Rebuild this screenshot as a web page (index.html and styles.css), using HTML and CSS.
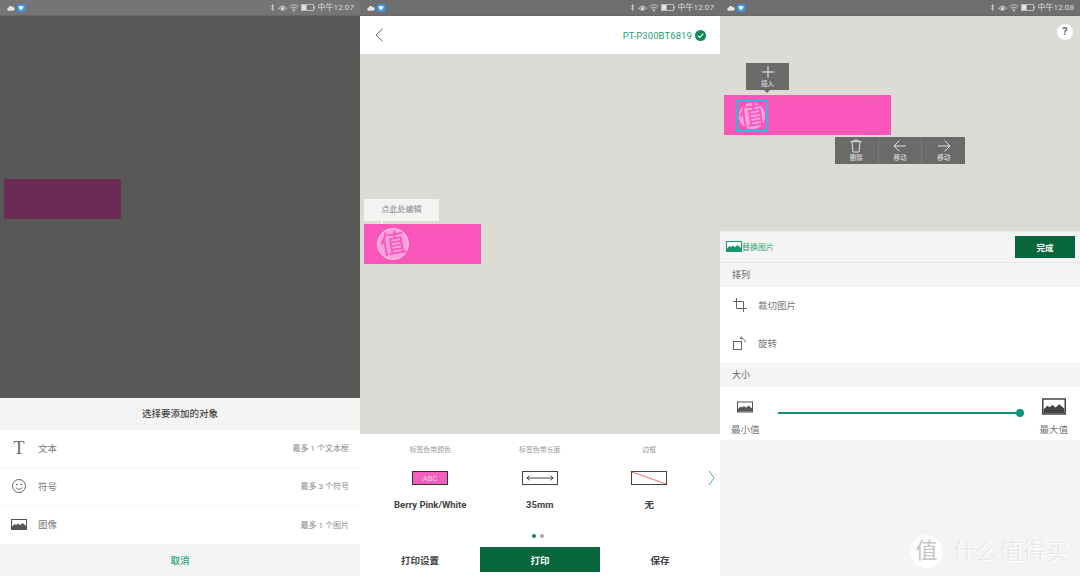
FILE: index.html
```html
<!DOCTYPE html>
<html lang="zh">
<head>
<meta charset="utf-8">
<title>Label editor</title>
<link rel="stylesheet" href="styles.css">
</head>
<body>
<svg class="defs" width="0" height="0" aria-hidden="true">
  <symbol id="cloud" viewBox="0 0 9 7"><path d="M1.800 6.600A1.700 1.700 0 0 1 1.600 3.200 2.600 2.600 0 0 1 6.400 2.400 2.100 2.100 0 0 1 7 6.600Z" fill="#e2e2e2"/></symbol>
  <symbol id="app" viewBox="0 0 9 9"><rect width="9" height="9" rx="1.500" fill="#3f95e0"/><path d="M2 2.200h5v2.200L4.500 7.200 2 4.400Z" fill="#e8f3fc"/></symbol>
  <symbol id="bt" viewBox="0 0 6 10"><path d="M1 2.600 4.600 6.800 3 8.600V1.400L4.600 3.200 1 7.400" fill="none" stroke="#ddd" stroke-width=".8"/></symbol>
  <symbol id="eye" viewBox="0 0 10 9"><path d="M.5 5Q5 .8 9.500 5 5 9 .5 5Z" fill="none" stroke="#ddd" stroke-width=".9"/><circle cx="5" cy="5" r="1.700" fill="#ddd"/><path d="M2.500 2 3.200 3M5 1.200V2.500M7.500 2 6.800 3" stroke="#ddd" stroke-width=".7"/></symbol>
  <symbol id="wifi" viewBox="0 0 10 8"><path d="M.5 2.600Q5-1 9.500 2.600M2 4.200Q5 2 8 4.200M3.400 5.700Q5 4.700 6.600 5.700" fill="none" stroke="#ddd" stroke-width=".8"/><circle cx="5" cy="7" r=".8" fill="#ddd"/></symbol>
  <symbol id="batt" viewBox="0 0 14 7"><rect x=".4" y=".4" width="12" height="6.200" fill="none" stroke="#ccc" stroke-width=".8"/><rect x="1" y="1" width="4.500" height="5" fill="#e4e4e4"/><rect x="12.700" y="2.300" width="1.100" height="2.400" fill="#ccc"/></symbol>
  <symbol id="pic" viewBox="0 0 16 11"><rect x=".5" y=".5" width="15" height="10" fill="#fff" stroke="currentColor"/><path d="M1 10V7.500L3.500 5 5 6 7 4.500 9 6.200 11.500 4 15 7V10Z" fill="currentColor"/></symbol>
</svg>

<main class="screens">

  <section class="screen screen-dim">
    <header class="status">
      <div class="status-side"><svg class="ic-cloud"><use href="#cloud"/></svg><svg class="ic-app"><use href="#app"/></svg></div>
      <div class="status-side"><svg class="ic-bt"><use href="#bt"/></svg><svg class="ic-eye"><use href="#eye"/></svg><svg class="ic-wifi"><use href="#wifi"/></svg><svg class="ic-batt"><use href="#batt"/></svg><span class="clock">中午12:07</span></div>
    </header>
    <div class="backdrop"><div class="label label-dim"></div></div>
    <div class="sheet">
      <h2 class="sheet-title">选择要添加的对象</h2>
      <ul class="sheet-list">
        <li class="sheet-row">
          <span class="t-glyph">T</span><span class="row-name">文本</span><span class="row-note">最多 1 个文本框</span>
        </li>
        <li class="sheet-row">
          <svg class="row-icon" viewBox="0 0 16 16"><circle cx="8" cy="8" r="6.500" fill="none" stroke="#555" stroke-width=".9"/><circle cx="5.700" cy="6.500" r=".8" fill="#555"/><circle cx="10.300" cy="6.500" r=".8" fill="#555"/><path d="M4.800 9.600Q8 13 11.200 9.600" fill="none" stroke="#555" stroke-width=".9"/></svg>
          <span class="row-name">符号</span><span class="row-note">最多 3 个符号</span>
        </li>
        <li class="sheet-row">
          <svg class="row-icon pic-gray"><use href="#pic"/></svg>
          <span class="row-name">图像</span><span class="row-note">最多 1 个图片</span>
        </li>
      </ul>
      <button class="sheet-cancel">取消</button>
    </div>
  </section>

  <section class="screen">
    <header class="status">
      <div class="status-side"><svg class="ic-cloud"><use href="#cloud"/></svg><svg class="ic-app"><use href="#app"/></svg></div>
      <div class="status-side"><svg class="ic-bt"><use href="#bt"/></svg><svg class="ic-eye"><use href="#eye"/></svg><svg class="ic-wifi"><use href="#wifi"/></svg><svg class="ic-batt"><use href="#batt"/></svg><span class="clock">中午12:07</span></div>
    </header>
    <div class="topbar">
      <svg class="back" viewBox="0 0 8 14"><path d="M7.500 .8 1 7 7.500 13.200" fill="none" stroke="#666" stroke-width="1"/></svg>
      <div class="device">PT-P300BT6819
        <svg class="check" viewBox="0 0 11 11"><circle cx="5.500" cy="5.500" r="5.500" fill="#0a8a56"/><path d="M2.800 5.600 4.800 7.500 8.300 3.700" fill="none" stroke="#fff" stroke-width="1.200"/></svg>
      </div>
    </div>
    <div class="canvas canvas-mid">
      <div class="hint">点此处编辑</div>
      <div class="label label-mid">
        <div class="label-guide"></div>
        <div class="stamp"><span class="stamp-glyph">值</span></div>
      </div>
    </div>
    <div class="settings">
      <div class="settings-cols">
        <div class="setting">
          <div class="setting-label">标签色带颜色</div>
          <div class="swatch swatch-pink">ABC</div>
          <div class="setting-value">Berry Pink/White</div>
        </div>
        <div class="setting">
          <div class="setting-label">标签色带长度</div>
          <div class="swatch">
            <svg class="len" viewBox="0 0 30 8"><path d="M1 4H29M4 1.500 1 4 4 6.500M26 1.500 29 4 26 6.500" fill="none" stroke="#333" stroke-width="1"/></svg>
          </div>
          <div class="setting-value">35mm</div>
        </div>
        <div class="setting">
          <div class="setting-label">边框</div>
          <div class="swatch">
            <svg class="none-line" viewBox="0 0 36 12" preserveAspectRatio="none"><path d="M0 0 36 12" stroke="#f46a6a" stroke-width="1"/></svg>
          </div>
          <div class="setting-value">无</div>
        </div>
        <svg class="next" viewBox="0 0 7 16"><path d="M1 .8 6 8 1 15.200" fill="none" stroke="#4fb497" stroke-width="1"/></svg>
      </div>
      <div class="dots"><i class="dot dot-on"></i><i class="dot"></i></div>
      <div class="actions">
        <button class="action">打印设置</button>
        <button class="action action-main">打印</button>
        <button class="action">保存</button>
      </div>
    </div>
  </section>

  <section class="screen">
    <header class="status">
      <div class="status-side"><svg class="ic-cloud"><use href="#cloud"/></svg><svg class="ic-app"><use href="#app"/></svg></div>
      <div class="status-side"><svg class="ic-bt"><use href="#bt"/></svg><svg class="ic-eye"><use href="#eye"/></svg><svg class="ic-wifi"><use href="#wifi"/></svg><svg class="ic-batt"><use href="#batt"/></svg><span class="clock">中午12:08</span></div>
    </header>
    <div class="canvas canvas-edit">
      <div class="help">?</div>
      <div class="tool tool-insert">
        <div class="tool-btn">
          <svg class="tool-icon" viewBox="0 0 14 14"><path d="M7 1V13M1 7H13" stroke="#eee" stroke-width="1" fill="none"/></svg>
          <span class="tool-text">插入</span>
        </div>
      </div>
      <div class="label label-edit">
        <div class="label-guide"></div>
        <div class="stamp stamp-selected"><span class="stamp-glyph">值</span></div>
      </div>
      <div class="tool tool-move">
        <div class="tool-btn">
          <svg class="tool-icon" viewBox="0 0 14 14"><path d="M1.500 2.500H12.500M3 2.500 4 13H10L11 2.500M5 2.500V1H9V2.500" stroke="#eee" stroke-width=".9" fill="none"/></svg>
          <span class="tool-text">删除</span>
        </div>
        <div class="tool-btn">
          <svg class="tool-icon" viewBox="0 0 14 14"><path d="M13 7H1M6.500 1.500 1 7 6.500 12.500" stroke="#eee" stroke-width=".9" fill="none"/></svg>
          <span class="tool-text">移动</span>
        </div>
        <div class="tool-btn">
          <svg class="tool-icon" viewBox="0 0 14 14"><path d="M1 7H13M7.500 1.500 13 7 7.500 12.500" stroke="#eee" stroke-width=".9" fill="none"/></svg>
          <span class="tool-text">移动</span>
        </div>
      </div>
    </div>
    <div class="edit-panel">
      <div class="replace-bar">
        <div class="replace"><svg class="replace-icon"><use href="#pic"/></svg>替换图片</div>
        <button class="done">完成</button>
      </div>
      <div class="group-head">排列</div>
      <div class="edit-row">
        <svg class="edit-icon" viewBox="0 0 14 14"><path d="M3.500 0V10.500H14M0 3.500H10.500V14" fill="none" stroke="#555" stroke-width=".9"/></svg>
        <span class="edit-name">裁切图片</span>
      </div>
      <div class="edit-row">
        <svg class="edit-icon" viewBox="0 0 14 14"><rect x=".5" y="5.500" width="8" height="8" fill="none" stroke="#555" stroke-width=".9"/><path d="M7 2Q11.500 1.800 12.500 6.500M7 2 9 .5M7 2 9 3.500" fill="none" stroke="#555" stroke-width=".8"/></svg>
        <span class="edit-name">旋转</span>
      </div>
      <div class="group-head">大小</div>
      <div class="size-row">
        <div class="size-end">
          <svg class="size-small"><use href="#pic"/></svg>
          <span class="size-text">最小值</span>
        </div>
        <div class="slider"><i class="slider-knob"></i></div>
        <div class="size-end">
          <svg class="size-big"><use href="#pic"/></svg>
          <span class="size-text">最大值</span>
        </div>
      </div>
    </div>
  </section>

  <div class="watermark"><span class="wm-badge">值</span><span class="wm-text">什么值得买</span></div>
</main>
</body>
</html>
```
FILE: styles.css
```css
* { box-sizing: border-box; }
html, body { margin: 0; padding: 0; }
body {
  width: 1080px;
  height: 576px;
  overflow: hidden;
  font-family: "Roboto", "Noto Sans CJK SC", sans-serif;
  background: #f4f4f4;
}
ul { list-style: none; margin: 0; padding: 0; }
h2 { margin: 0; }
button { border: 0; padding: 0; background: none; font-family: inherit; }
.defs { position: absolute; }

.screens { position: relative; display: flex; width: 1080px; height: 576px; }
.screen { width: 360px; height: 576px; display: flex; flex-direction: column; background: #f4f4f4; }

.status {
  height: 16px;
  flex: none;
  display: flex;
  justify-content: space-between;
  align-items: center;
  padding: 0 6px 0 7px;
  background: #6f6f6f;
  border-bottom: 1px solid #686868;
}
.screen-dim .status { background: #757575; }
.status-side { display: flex; align-items: center; gap: 2px; }
.ic-cloud { width: 8px; height: 6px; }
.ic-app { width: 8px; height: 8px; }
.ic-bt { width: 5px; height: 9px; margin-right: 1px; }
.ic-eye { width: 9px; height: 8px; margin-right: 0; }
.ic-wifi { width: 10px; height: 8px; margin-right: 0; }
.ic-batt { width: 14px; height: 7px; margin-right: 0; }
.clock { font-size: 8px; line-height: 10px; color: #ddd; letter-spacing: .1px; }

/* panel 1 */
.backdrop { position: relative; flex: 1; background: #585857; }
.label { position: absolute; width: 117px; height: 40px; }
.label-dim { left: 4px; top: 163px; background: #6b2b55; }
.sheet { flex: none; height: 178px; background: #f4f4f4; }
.sheet-title {
  height: 32px;
  font-size: 9.500px;
  font-weight: 500;
  line-height: 32px;
  text-align: center;
  color: #444;
}
.sheet-list { background: #fff; }
.sheet-row {
  display: flex;
  align-items: center;
  height: 38px;
  padding: 0 11px 2px;
  border-bottom: 1px solid #f6f6f6;
}
.sheet-row:last-child { border-bottom: 0; }
.t-glyph {
  width: 16px;
  font-family: "Liberation Serif", serif;
  font-size: 18px;
  line-height: 18px;
  text-align: center;
  color: #666;
}
.row-icon { width: 16px; height: 16px; flex: none; }
.pic-gray { height: 11px; color: #555; }
.row-name { margin-left: 11px; font-size: 9.500px; color: #777; }
.row-note { margin-left: auto; font-size: 8px; color: #888; }
.sheet-cancel {
  display: block;
  width: 100%;
  height: 32px;
  font-size: 9.500px;
  font-weight: 500;
  color: #2aa573;
}

/* panel 2 */
.topbar {
  height: 38px;
  flex: none;
  display: flex;
  justify-content: space-between;
  align-items: center;
  padding: 0 14px 0 15px;
  background: #fff;
}
.back { width: 8px; height: 14px; }
.device { display: flex; align-items: center; gap: 3px; font-size: 9.500px; font-weight: 400; letter-spacing: .1px; color: #27a070; }
.check { width: 11px; height: 11px; }
.canvas { position: relative; background: #dcdbd5; }
.canvas-mid { flex: none; height: 380px; }
.hint {
  position: absolute;
  left: 4px;
  top: 145px;
  width: 75px;
  height: 22px;
  background: #f3f3f2;
  font-size: 8px;
  line-height: 22px;
  text-align: center;
  color: #888;
}
.hint::after {
  content: "";
  position: absolute;
  left: 17px;
  bottom: -3px;
  width: 2px;
  height: 3px;
  background: #f3f3f2;
}
.label-mid { left: 4px; top: 170px; background: #fa55bb; }
.label-guide {
  position: absolute;
  left: 12px;
  top: 5px;
  right: 12px;
  bottom: 5px;
  border: 1px solid #ea66b5;
}
.stamp {
  position: absolute;
  left: 13px;
  top: 4px;
  width: 32px;
  height: 32px;
  display: flex;
  align-items: center;
  justify-content: center;
  border-radius: 50%;
  background: #f9a2db;
  border: 1px solid #fcc6e9;
  color: #fa55bb;
}
.stamp-glyph {
  display: block;
  font-size: 26px;
  line-height: 30px;
  transform: rotate(-10deg);
}
.stamp-selected {
  border-radius: 0;
  border: 2px solid #33b8dc;
  background: radial-gradient(circle closest-side, #f9a2db 92%, #fa55bb 96%);
  left: 12px;
  top: 5px;
}
.settings { flex: 1; background: #fff; display: flex; flex-direction: column; }
.settings-cols { position: relative; display: flex; padding-top: 10px; height: 98px; }
.setting { width: 109.500px; display: flex; flex-direction: column; align-items: center; }
.setting:first-child { margin-left: 15.500px; }
.setting-label { font-size: 6.900px; line-height: 12px; color: #999; }
.swatch {
  width: 36px;
  height: 14px;
  margin-top: 15px;
  border: 1px solid #444;
  display: flex;
  align-items: center;
  justify-content: center;
  overflow: hidden;
}
.swatch-pink { background: #f35fc0; border-color: #333; font-family: "Liberation Sans", sans-serif; font-size: 7px; color: #f5d4ec; }
.len { width: 28px; height: 8px; }
.none-line { width: 100%; height: 100%; display: block; }
.setting-value { margin-top: 14px; font-size: 9.500px; font-weight: 700; line-height: 12px; color: #444; }
.next { position: absolute; left: 348px; top: 36px; width: 7px; height: 16px; }
.dots { display: flex; justify-content: center; gap: 4px; height: 15px; padding: 2px 4px 0 0; }
.dot { width: 4px; height: 4px; border-radius: 50%; background: #aaa; }
.dot-on { background: #0a8a56; }
.actions { display: flex; height: 25px; }
.action { flex: 1; font-size: 9.500px; font-weight: 700; color: #444; }
.action-main { background: #07663c; color: #fff; }

/* panel 3 */
.canvas-edit { flex: none; height: 215px; }
.help {
  position: absolute;
  right: 7px;
  top: 8px;
  width: 16px;
  height: 16px;
  border-radius: 50%;
  background: #fff;
  font-size: 11px;
  font-weight: 500;
  line-height: 16px;
  text-align: center;
  color: #555;
}
.label-edit { left: 4px; top: 79px; width: 167px; background: #fa55bb; }
.tool { position: absolute; display: flex; height: 27px; background: #6a6a69; }
.tool-insert { left: 26px; top: 47px; width: 43px; }
.tool-insert::after {
  content: "";
  position: absolute;
  left: 18px;
  bottom: -3px;
  border-left: 3px solid transparent;
  border-right: 3px solid transparent;
  border-top: 3px solid #6a6a69;
}
.tool-move { left: 115px; top: 121px; width: 130px; }
.tool-btn {
  flex: 1;
  display: flex;
  flex-direction: column;
  align-items: center;
  padding-top: 2px;
  border-left: 1px solid #7a7a79;
}
.tool-btn:first-child { border-left: 0; }
.tool-icon { width: 14px; height: 14px; }
.tool-text { margin-top: 1px; font-size: 6.500px; line-height: 9px; color: #e6e6e6; }
.edit-panel { flex: 1; background: #f4f4f4; }
.replace-bar {
  height: 32px;
  display: flex;
  align-items: center;
  justify-content: space-between;
  padding: 0 5px 0 6px;
  border-top: 1px solid #ececec;
  border-bottom: 1px solid #e8e8e8;
}
.replace { display: flex; align-items: center; margin-top: -2px; font-size: 8px; color: #2aa573; }
.replace-icon { width: 16px; height: 11px; color: #159a68; }
.done {
  width: 60px;
  height: 22px;
  background: #07663c;
  color: #fff;
  font-size: 8.500px;
  font-weight: 700;
}
.group-head {
  height: 24px;
  padding-left: 12px;
  font-size: 9px;
  line-height: 24px;
  color: #666;
}
.edit-row { display: flex; align-items: center; height: 38px; padding: 0 0 2px 13px; background: #fff; }
.edit-icon { width: 14px; height: 14px; }
.edit-name { margin-left: 11px; font-size: 9.500px; color: #777; }
.size-row {
  position: relative;
  display: flex;
  align-items: flex-start;
  justify-content: space-between;
  height: 53px;
  padding: 11px 12px 0 11px;
  background: #fff;
}
.size-end { display: flex; flex-direction: column; align-items: center; height: 37px; justify-content: space-between; }
.size-small { width: 16px; height: 12px; color: #555; margin-top: 3px; }
.size-big { width: 24px; height: 17px; color: #444; }
.size-text { font-size: 9.500px; line-height: 11px; color: #777; }
.slider {
  flex: 1;
  height: 2px;
  margin: 14px 19px 0 18px;
  position: relative;
  background: #10907a;
}
.slider-knob {
  position: absolute;
  right: -4px;
  top: -3px;
  width: 8px;
  height: 8px;
  border-radius: 50%;
  background: #0a9680;
}

.watermark {
  position: absolute;
  left: 910px;
  top: 535px;
  display: flex;
  align-items: center;
  gap: 9px;
}
.wm-badge {
  width: 33px;
  height: 33px;
  border-radius: 50%;
  background: rgba(255,255,255,.9);
  font-size: 22px;
  line-height: 31px;
  text-align: center;
  color: #c6c6c6;
}
.wm-text { font-size: 23.400px; font-weight: 300; line-height: 30px; color: #e6e6e6; text-shadow: 1px 1px 0 #fff; }
```
